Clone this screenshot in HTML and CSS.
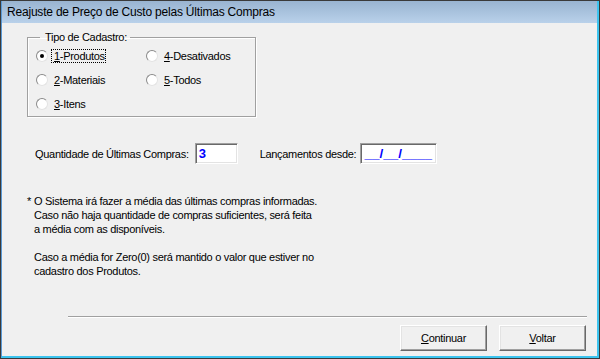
FILE: index.html
```html
<!DOCTYPE html>
<html lang="pt-BR">
<head>
    <meta charset="UTF-8">
    <meta name="viewport" content="width=device-width, initial-scale=1.0">
    <title>Reajuste de Preço de Custo</title>
    <link rel="stylesheet" href="styles.css">
</head>
<body>
    <div class="window">
        <div class="frame">
            <div class="titlebar">Reajuste de Preço de Custo pelas Últimas Compras</div>
            <div class="content">
                <fieldset class="group">
                    <legend class="group-label">Tipo de Cadastro:</legend>
                    <div class="radio-grid">
                        <label class="option">
                            <span class="radio checked"></span>
                            <span class="option-text focused"><u>1</u>-Produtos</span>
                        </label>
                        <label class="option">
                            <span class="radio"></span>
                            <span class="option-text"><u>2</u>-Materiais</span>
                        </label>
                        <label class="option">
                            <span class="radio"></span>
                            <span class="option-text"><u>3</u>-Itens</span>
                        </label>
                        <label class="option">
                            <span class="radio"></span>
                            <span class="option-text"><u>4</u>-Desativados</span>
                        </label>
                        <label class="option">
                            <span class="radio"></span>
                            <span class="option-text"><u>5</u>-Todos</span>
                        </label>
                    </div>
                </fieldset>

                <div class="form-row">
                    <span class="field-label">Quantidade de Últimas Compras:</span>
                    <span class="field qtd">3</span>
                    <span class="field-label desde-label">Lançamentos desde:</span>
                    <span class="field data">__/__/____</span>
                </div>

                <div class="notes">
                    <p><span class="star">*</span>O Sistema irá fazer a média das últimas compras informadas.<br>
                        Caso não haja quantidade de compras suficientes, será feita<br>
                        a média com as disponíveis.</p>
                    <p>Caso a média for Zero(0) será mantido o valor que estiver no<br>
                        cadastro dos Produtos.</p>
                </div>

                <div class="footer">
                    <div class="separator"></div>
                    <div class="buttons">
                        <button class="btn"><u>C</u>ontinuar</button>
                        <button class="btn"><u>V</u>oltar</button>
                    </div>
                </div>
            </div>
        </div>
    </div>
</body>
</html>
```

FILE: styles.css
```css
body {
    margin: 0;
    background: #f0f0f0;
    font-family: "Liberation Sans", Arial, sans-serif;
    font-size: 11px;
    letter-spacing: -0.3px;
    color: #000;
}

.window {
    width: 600px;
    height: 359px;
    box-sizing: border-box;
    border: 1px solid #3a3a3a;
}

.frame {
    height: 100%;
    box-sizing: border-box;
    border-left: 1px solid #5a9ad6;
    border-right: 2px solid #3cc4ef;
    border-bottom: 2px solid #3cc4ef;
    display: flex;
    flex-direction: column;
}

.titlebar {
    height: 22px;
    line-height: 22px;
    padding-left: 5px;
    font-size: 12px;
    letter-spacing: -0.2px;
    background: linear-gradient(#99b4d1, #b9d1ea);
    color: #000;
    white-space: nowrap;
}

.content {
    flex: 1;
    display: flex;
    flex-direction: column;
    background: #f0f0f0;
}

/* group box */
.group {
    width: 229px;
    box-sizing: border-box;
    margin: 8px 0 0 25px;
    padding: 0 0 0 8px;
    border: 1px solid #a0a0a0;
    box-shadow: inset 1px 1px #fff, 1px 1px #fff;
}

.group-label {
    margin-left: 4px;
    padding: 0 3px 0 5px;
    line-height: 12px;
}

.radio-grid {
    display: grid;
    grid-template-columns: 110px auto;
    grid-template-rows: repeat(3, 24px);
    grid-auto-flow: column;
    padding-top: 1px;
}

.option {
    display: flex;
    align-items: center;
    gap: 5px;
}

.radio {
    width: 12px;
    height: 12px;
    box-sizing: border-box;
    border-radius: 50%;
    border: 1px solid;
    border-color: #8a8a8a #e3e3e3 #e3e3e3 #8a8a8a;
    background: #fff;
    display: flex;
    align-items: center;
    justify-content: center;
}

.radio.checked::after {
    content: "";
    width: 4px;
    height: 4px;
    border-radius: 50%;
    background: #000;
}

.option-text {
    padding: 1px;
}

.option-text.focused {
    outline: 1px dotted #000;
    outline-offset: -1px;
    margin-left: -2px;
    padding: 1px 1px 1px 3px;
}

/* quantidade / data */
.form-row {
    display: flex;
    align-items: center;
    margin-top: 26px;
    padding-left: 33px;
    height: 21px;
}

.field {
    height: 21px;
    box-sizing: border-box;
    background: #fff;
    border: 1px solid;
    border-color: #a0a0a0 #fff #fff #a0a0a0;
    box-shadow: inset 1px 1px #696969, inset -1px -1px #e3e3e3;
    color: #0000ff;
    font-weight: bold;
    font-size: 13px;
    letter-spacing: 0;
    line-height: 19px;
    padding-left: 3px;
}

.qtd {
    width: 43px;
    margin-left: 6px;
}

.desde-label {
    margin-left: 22px;
}

.data {
    width: 77px;
    margin-left: 4px;
    font-size: 13.5px;
}

/* observacoes */
.notes {
    margin-top: 30px;
    padding-left: 32px;
    line-height: 14px;
}

.notes p {
    margin: 0 0 14px 0;
}

.star {
    margin-left: -7px;
    margin-right: 3px;
}

/* rodape */
.footer {
    margin-top: auto;
    padding-bottom: 5px;
}

.separator {
    margin: 0 10px 0 66px;
    border-top: 1px solid #a0a0a0;
    border-bottom: 1px solid #fff;
}

.buttons {
    display: flex;
    justify-content: flex-end;
    gap: 12px;
    margin: 7px 11px 0 0;
}

.btn {
    width: 87px;
    height: 26px;
    box-sizing: border-box;
    font-family: inherit;
    font-size: 11px;
    letter-spacing: -0.3px;
    color: #000;
    background: #f0f0f0;
    border: 1px solid;
    border-color: #fff #696969 #696969 #fff;
    box-shadow: inset -1px -1px #a0a0a0, inset 1px 1px #e3e3e3;
    padding: 0;
}
```
